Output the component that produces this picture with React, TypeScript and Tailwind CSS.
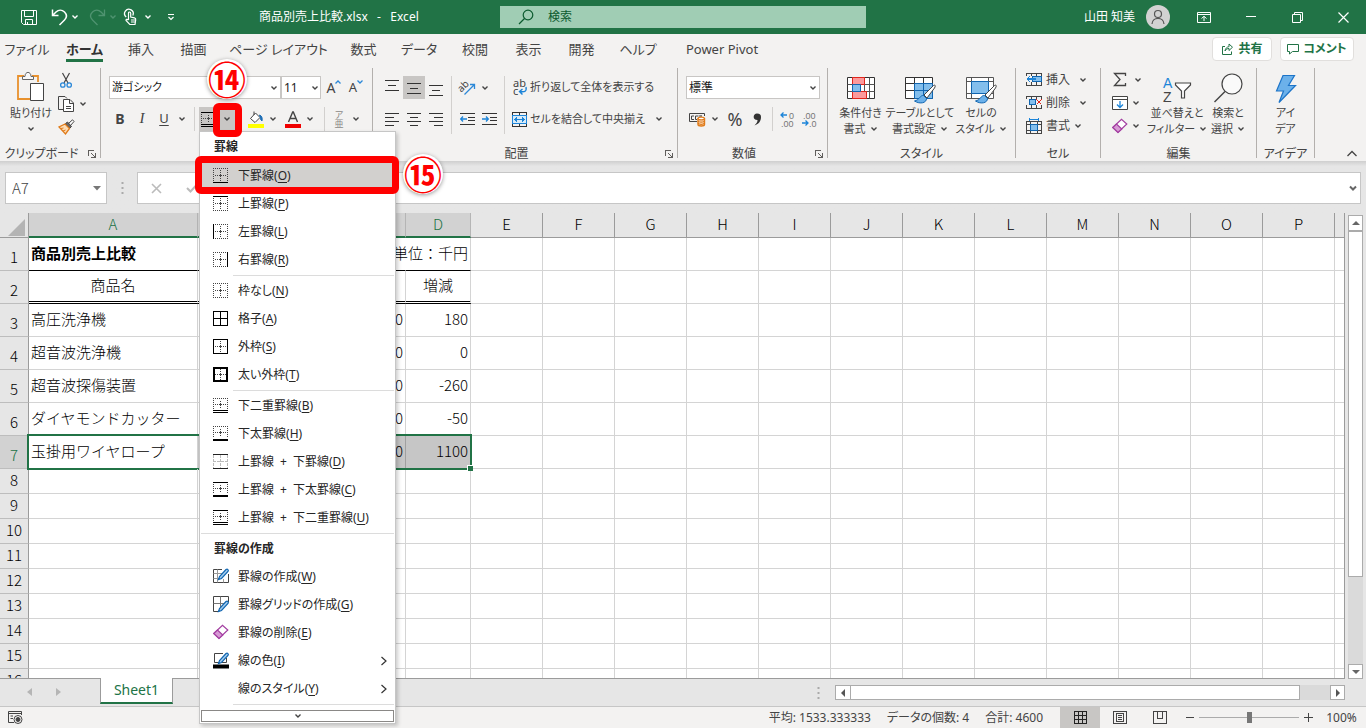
import React from "react";

const UI = "font-['Noto_Sans','Noto_Sans_CJK_JP',sans-serif] [font-feature-settings:'palt']";

type SvgProps = { w: number; h: number; children: React.ReactNode; className?: string; crisp?: boolean };

function Svg({ w, h, children, className = "", crisp = false }: SvgProps) {
  return (
    <svg
      width={w}
      height={h}
      viewBox={`0 0 ${w} ${h}`}
      fill="none"
      stroke="#444"
      strokeWidth="1"
      shapeRendering={crisp ? "crispEdges" : "auto"}
      className={`shrink-0 overflow-visible ${className}`}
      aria-hidden="true"
    >
      {children}
    </svg>
  );
}

function Chevron({ color = "#444", className = "" }: { color?: string; className?: string }) {
  return (
    <Svg w={8} h={6} className={className}>
      <path d="M1.5 1.5 L4 4 L6.5 1.5" stroke={color} strokeWidth="1.4" />
    </Svg>
  );
}

function Btn({ label, className, children }: { label: string; className: string; children: React.ReactNode }) {
  return (
    <button type="button" aria-label={label} className={`flex shrink-0 items-center justify-center ${className}`}>
      {children}
    </button>
  );
}

/* ---------- title bar ---------- */

function TitleBar() {
  return (
    <header className="flex h-[34px] shrink-0 items-center bg-[#217346] text-xs text-white">
      <div className="flex w-[259px] shrink-0 items-center pl-[17px]">
        <Btn label="上書き保存" className="w-6">
          <Svg w={18} h={17}>
            <path d="M1.5 1.5 H16.5 V15.5 H3.5 L1.5 13.5 Z M4.5 1.5 V7.5 H13.5 V1.5 M5.5 15.5 V10.5 H12.5 V15.5 M7.5 13 V15.5" stroke="#fff" />
          </Svg>
        </Btn>
        <Btn label="元に戻す" className="ml-2 w-5">
          <Svg w={17} h={18}>
            <path d="M1.5 1.500 V7.5 H7.5 M1.5 7.5 L5 4 C7.500 1.500 11 1.500 13.500 4 C16 6.500 16 9.500 13.500 12 L8.500 17" stroke="#fff" strokeWidth="1.5" />
          </Svg>
        </Btn>
        <Btn label="元に戻すの一覧" className="w-3"><Chevron color="#fff" /></Btn>
        <Btn label="やり直し" className="ml-[6px] w-5">
          <Svg w={17} h={18}>
            <path d="M15.500 1.500 V7.500 H9.500 M15.500 7.500 L12 4 C9.500 1.500 6 1.500 3.500 4 C1 6.500 1 9.500 3.500 12 L8.500 17" stroke="#4f9370" strokeWidth="1.300" />
          </Svg>
        </Btn>
        <Btn label="やり直しの一覧" className="w-3"><Chevron color="#4f9370" /></Btn>
        <Btn label="タッチ/マウス モード" className="ml-px w-5">
          <Svg w={15} h={18}>
            <path d="M3.200 9 A4.300 4.300 0 1 1 9.800 7.500" stroke="#fff" strokeWidth="1.300" />
            <path d="M5.500 12 V5.200 C5.500 3.600 7.700 3.600 7.700 5.200 V9 L11.500 9.800 C12.500 10 12.900 10.700 12.700 11.800 L12 16.500 H6.800 L3 12.500 C2.700 11.500 4 10.800 5.500 12 M8 12 H12 M8 14 H12" stroke="#fff" strokeWidth="1.200" />
          </Svg>
        </Btn>
        <Btn label="モードの選択" className="ml-[2px] w-3"><Chevron color="#fff" /></Btn>
        <Btn label="クイック アクセスのカスタマイズ" className="ml-[11px] w-3">
          <Svg w={8} h={8}>
            <path d="M1 1.500 H7 M1.500 4 L4 6.500 L6.500 4" stroke="#fff" strokeWidth="1.200" />
          </Svg>
        </Btn>
      </div>
      <h1 className="w-[241px] shrink-0 whitespace-nowrap text-xs font-normal">商品別売上比較.xlsx&nbsp;&nbsp; -&nbsp;&nbsp; Excel</h1>
      <label className="flex h-[22px] w-[366px] items-center bg-[#a0cdb4] pl-[18px]">
        <Svg w={17} h={16}>
          <circle cx="10" cy="6" r="4.800" stroke="#0b5a2e" strokeWidth="1.200" />
          <path d="M6.500 9.500 L1 15" stroke="#0b5a2e" strokeWidth="1.300" />
        </Svg>
        <input
          aria-label="検索"
          placeholder="検索"
          className="ml-[13px] w-40 bg-transparent text-xs text-[#0b5a2e] outline-none placeholder:text-[#0b5a2e] placeholder:opacity-100"
        />
      </label>
      <div className="ml-auto flex items-center">
        <span>山田 知美</span>
        <span className="ml-[11px] flex size-6 items-center justify-center rounded-full bg-[#d2d2d2]">
          <Svg w={16} h={16}>
            <circle cx="8" cy="5" r="3.500" stroke="#555" strokeWidth="1.200" />
            <path d="M2 15 C2.500 7.500 13.500 7.500 14 15" stroke="#555" strokeWidth="1.200" />
          </Svg>
        </span>
        <Btn label="リボンの表示オプション" className="ml-[11px] h-8 w-[46px]">
          <Svg w={14} h={11}>
            <path d="M.5 .5 H13.500 V10.500 H.5 Z M.5 2.500 H13.500 M7 9 V4.500 M4.500 6.500 L7 4.300 L9.500 6.500" stroke="#fff" />
          </Svg>
        </Btn>
        <Btn label="最小化" className="h-8 w-[47px]">
          <Svg w={10} h={2} crisp><path d="M0 .5 H10" stroke="#fff" /></Svg>
        </Btn>
        <Btn label="元に戻す (縮小)" className="h-8 w-[46px]">
          <Svg w={11} h={11}><path d="M.5 2.500 H8.500 V10.500 H.5 Z M2.500 2.500 V.5 H10.500 V8.500 H8.500" stroke="#fff" /></Svg>
        </Btn>
        <Btn label="閉じる" className="h-8 w-[46px]">
          <Svg w={11} h={11}><path d="M.5 .5 L10.500 10.500 M10.500 .5 L.5 10.500" stroke="#fff" strokeWidth="1.200" /></Svg>
        </Btn>
      </div>
    </header>
  );
}

/* ---------- ribbon tabs ---------- */

const TABS: [string, string][] = [
  ["ファイル", "w-[54px]"],
  ["ホーム", "w-[61px]"],
  ["挿入", "w-[52px]"],
  ["描画", "w-[53px]"],
  ["ページ レイアウト", "w-[117px]"],
  ["数式", "w-[53px]"],
  ["データ", "w-[58px]"],
  ["校閲", "w-[54px]"],
  ["表示", "w-[53px]"],
  ["開発", "w-[53px]"],
  ["ヘルプ", "w-[60px]"],
  ["Power Pivot", "w-[108px]"],
];

function RibbonTabs() {
  return (
    <nav className="flex h-[30px] shrink-0 items-center text-[13px]">
      {TABS.map(([name, width]) => (
        <button key={name} type="button" className={`flex h-[30px] shrink-0 items-start justify-center whitespace-nowrap ${width}`}>
          <span
            className={
              name === "ホーム"
                ? "h-7 border-b-[3px] border-[#217346] pt-[5px] font-bold leading-5 text-[#333]"
                : "pt-[5px] leading-5"
            }
          >
            {name}
          </span>
        </button>
      ))}
      <div className="ml-auto flex gap-2 pr-3 text-xs font-bold text-[#217346]">
        <button type="button" className="flex h-6 w-[60px] items-center justify-center gap-1 rounded-sm border border-[#e1dfdd] bg-white">
          <Svg w={13} h={12}>
            <path d="M4 3.500 H1.500 V11.500 H10.500 V8.500 M4 8 C4.500 4.500 7 3.700 8 3.700 V1 L11.500 4.200 L8 7.500 V5.500 C6.500 5.500 5 6 4 8" stroke="#217346" />
          </Svg>
          共有
        </button>
        <button type="button" className="flex h-6 w-[74px] items-center justify-center gap-1 rounded-sm border border-[#e1dfdd] bg-white">
          <Svg w={12} h={11}>
            <path d="M.5 .5 H11.500 V7.500 H5.500 L2.500 10 V7.500 H.5 Z" stroke="#217346" />
          </Svg>
          コメント
        </button>
      </div>
    </nav>
  );
}

/* ---------- ribbon ---------- */

function Group({ label, width, launcher, covered, children }: { label: string; width: string; launcher?: boolean; covered?: boolean; children: React.ReactNode }) {
  return (
    <section aria-label={label} className={`flex h-[90px] shrink-0 flex-col border-r border-[#b3b0ad] ${width}`}>
      <div className="h-[75px]">{children}</div>
      <div className={`relative flex h-[15px] items-center justify-center whitespace-nowrap pt-[6px] ${launcher ? "pr-[17px]" : ""}`}>
        {!covered && <span>{label}</span>}
        {launcher && !covered && (
          <button type="button" aria-label={`${label}の設定`} className="absolute bottom-0 right-1">
            <Svg w={8} h={8} crisp>
              <path d="M.5 6 V.5 H6 M3 3 L7 7 M7.500 3 V7.500 H3" stroke="#605e5c" />
            </Svg>
          </button>
        )}
      </div>
    </section>
  );
}

const VLine = ({ className = "" }: { className?: string }) => <span className={`h-6 w-px shrink-0 bg-[#d2d0ce] ${className}`} />;

function Clipboard() {
  return (
    <div className="flex pl-2">
      <button type="button" className="flex w-[46px] flex-col items-center whitespace-nowrap pt-[3px] text-[11px]">
        <Svg w={28} h={31}>
          <path d="M13 28 H1 V5 H7 M15 5 H21 V11" stroke="#e8912d" strokeWidth="1.800" />
          <path d="M5.500 8.500 V5.500 H8 C8 0 14 0 14 5.500 H16.500 V8.500 Z" stroke="#666" fill="#f8f8f8" />
          <path d="M13.500 12.500 H26.500 V29.500 H13.500 Z" stroke="#444" fill="#fff" />
        </Svg>
        <span className="mt-[2px] leading-[18px]">貼り付け</span>
        <Chevron className="mt-1" />
      </button>
      <div className="ml-[3px] flex flex-col">
        <Btn label="切り取り" className="h-6 w-[18px]">
          <Svg w={12} h={17}>
            <path d="M2.500 1 L8 11 M9.500 1 L4 11" stroke="#444" strokeWidth="1.200" />
            <circle cx="2.800" cy="13" r="2.200" stroke="#2b88d8" strokeWidth="1.300" />
            <circle cx="9.200" cy="13" r="2.200" stroke="#2b88d8" strokeWidth="1.300" />
          </Svg>
        </Btn>
        <div className="flex">
          <Btn label="コピー" className="h-6 w-[18px]">
            <Svg w={17} h={17}>
              <path d="M5.500 13.500 H.5 V.5 H7 L9 2.500" />
              <path d="M5.500 3.500 H12 L15.500 7 V15.500 H5.500 Z M11.500 3.500 V7.500 H15.500 M8 10.500 H13 M8 12.500 H13" fill="#fff" />
            </Svg>
          </Btn>
          <Btn label="コピーの一覧" className="w-4"><Chevron /></Btn>
        </div>
        <Btn label="書式のコピー" className="h-[22px] w-[18px]">
          <Svg w={17} h={16}>
            <path d="M10 5 L14.500 .8 L16 2.500 L12 7" fill="#fff" />
            <path d="M7.500 4.500 L9.500 3 L13.500 7.500 L11.500 9.500 Z" fill="#666" />
            <path d="M7 5 L1 8 L7.500 15 L11.500 9.500 Z" stroke="#e07b1a" fill="#fbdcb5" strokeWidth="1.300" />
            <path d="M3 9.500 L5.500 9 M5 12 L7.500 11" stroke="#e07b1a" />
          </Svg>
        </Btn>
      </div>
    </div>
  );
}

function FontGroup() {
  return (
    <div className="pl-2 pt-2">
      <div className="flex h-[23px] items-center">
        <div className="relative h-[23px] w-[172px]">
          <select aria-label="フォント" className="h-full w-full appearance-none border border-[#c8c6c4] bg-white pl-[2px] text-[11px] text-[#222]">
            <option>游ゴシック</option>
          </select>
          <Chevron className="pointer-events-none absolute right-[3px] top-[9px]" />
        </div>
        <div className="relative h-[23px] w-10">
          <select aria-label="フォント サイズ" className="h-full w-full appearance-none border border-[#c8c6c4] bg-white pl-[2px] text-xs text-[#222]">
            <option>11</option>
          </select>
          <Chevron className="pointer-events-none absolute right-[2px] top-[9px]" />
        </div>
        <Btn label="フォント サイズの拡大" className="ml-[2px] h-6 w-[22px] text-sm">
          <span>A</span>
          <Svg w={6} h={4} className="mb-3"><path d="M.5 3.500 L3 1 L5.500 3.500" stroke="#2b88d8" strokeWidth="1.300" /></Svg>
        </Btn>
        <Btn label="フォント サイズの縮小" className="h-6 w-[22px] text-[13px]">
          <span>A</span>
          <Svg w={6} h={4} className="mb-3"><path d="M.5 .5 L3 3 L5.500 .5" stroke="#2b88d8" strokeWidth="1.300" /></Svg>
        </Btn>
      </div>
      <div className="mt-2 flex h-6 items-center">
        <Btn label="太字" className="w-[22px] text-sm font-bold">B</Btn>
        <Btn label="斜体" className="w-[22px] font-['Liberation_Serif',serif] text-[15px] italic">I</Btn>
        <Btn label="下線" className="w-[22px] text-[13px] underline underline-offset-2">U</Btn>
        <Btn label="下線の種類" className="w-[14px]"><Chevron /></Btn>
        <VLine className="ml-[5px]" />
        <Btn label="罫線" className="ml-1 h-6 w-[19px] bg-[#c8c6c4]"><BorderIcon kind="bottomDouble" top /></Btn>
        <Btn label="罫線の一覧" className="h-6 w-[18px] bg-[#c8c6c4]"><Chevron /></Btn>
        <Btn label="塗りつぶしの色" className="ml-[11px] w-[18px]">
          <Svg w={16} h={17}>
            <path d="M2.500 7.500 L7.500 2 L12 6.500 L7 11.500 Z M6 4 V0.500" fill="#fff" />
            <path d="M11.500 4 C14 5 14.500 7 14 10 C12 9 12.500 6 11.500 4" stroke="#1c6db5" fill="#1c6db5" />
            <path d="M0 15 H16" stroke="#ff0" strokeWidth="4" />
          </Svg>
        </Btn>
        <Btn label="塗りつぶしの色の一覧" className="w-4"><Chevron /></Btn>
        <Btn label="フォントの色" className="ml-[3px] w-[18px]">
          <Svg w={16} h={17}>
            <path d="M3.500 11 L7.700 1 H8.300 L12.500 11 M5 7.500 H11" strokeWidth="1.400" />
            <path d="M0 15 H16" stroke="#f00000" strokeWidth="4" />
          </Svg>
        </Btn>
        <Btn label="フォントの色の一覧" className="w-4"><Chevron /></Btn>
        <VLine className="ml-[6px]" />
        <Btn label="ふりがな" className="ml-[5px] w-[18px] flex-col text-[9px] leading-[9px] text-[#8a8886]">
          <span>ア</span>
          <span>亜</span>
        </Btn>
        <Btn label="ふりがなの一覧" className="w-4"><Chevron /></Btn>
      </div>
    </div>
  );
}

function Lines({ d }: { d: string }) {
  return <Svg w={14} h={14} crisp><path d={d} stroke="#333" /></Svg>;
}

function AlignGroup() {
  return (
    <div className="flex pl-2 pt-2">
      <div className="w-[70px]">
        <div className="flex h-[23px]">
          <Btn label="上揃え" className="w-[22px] pb-1"><Lines d="M0 1.500 H14 M3 6.500 H11 M0 11.500 H14" /></Btn>
          <Btn label="上下中央揃え" className="w-[22px] bg-[#c8c6c4]"><Lines d="M0 2.500 H14 M3 7.500 H11 M0 12.500 H14" /></Btn>
          <Btn label="下揃え" className="w-[22px] pt-1"><Lines d="M0 2.500 H14 M3 7.500 H11 M0 12.500 H14" /></Btn>
        </div>
        <div className="mt-2 flex h-6">
          <Btn label="左揃え" className="w-[22px]"><Lines d="M0 1.500 H14 M0 5.500 H9 M0 9.500 H14 M0 13.500 H9" /></Btn>
          <Btn label="中央揃え" className="w-[22px]"><Lines d="M0 1.500 H14 M3 5.500 H11 M0 9.500 H14 M3 13.500 H11" /></Btn>
          <Btn label="右揃え" className="w-[22px]"><Lines d="M0 1.500 H14 M5 5.500 H14 M0 9.500 H14 M5 13.500 H14" /></Btn>
        </div>
      </div>
      <div className="h-[58px] w-[54px] border-x border-[#d2d0ce]">
        <div className="flex h-[23px] pl-[6px]">
          <Btn label="方向" className="w-5">
            <Svg w={18} h={17}>
              <text x="-1" y="10" fontSize="10" fill="#444" stroke="none" transform="rotate(-45 5 8)">ab</text>
              <path d="M5.500 15.500 L15 6 M11 5.500 H15.500 V10" stroke="#2b88d8" strokeWidth="1.300" />
            </Svg>
          </Btn>
          <Btn label="方向の一覧" className="w-[14px]"><Chevron /></Btn>
        </div>
        <div className="mt-2 flex h-6 pl-1">
          <Btn label="インデントを減らす" className="w-[22px]">
            <Svg w={15} h={12}>
              <path d="M0 .5 H15 M8 4.500 H15 M8 7.500 H15 M0 11.500 H15" stroke="#333" />
              <path d="M7 6 H1 M3 3.500 L.7 6 L3 8.500" stroke="#1c84d8" strokeWidth="1.300" />
            </Svg>
          </Btn>
          <Btn label="インデントを増やす" className="w-[22px]">
            <Svg w={15} h={12}>
              <path d="M0 .5 H15 M8 4.500 H15 M8 7.500 H15 M0 11.500 H15" stroke="#333" />
              <path d="M0 6 H6 M4 3.500 L6.300 6 L4 8.500" stroke="#1c84d8" strokeWidth="1.300" />
            </Svg>
          </Btn>
        </div>
      </div>
      <div className="pl-[7px] text-[11px]">
        <button type="button" className="flex h-[23px] items-center gap-[2px] whitespace-nowrap">
          <Svg w={16} h={17}>
            <text x="1" y="8" fontSize="11" fill="#444" stroke="none">ab</text>
            <text x="1" y="16" fontSize="11" fill="#444" stroke="none">c</text>
            <path d="M14 8 C15 13 12 13 8 12.500 M10.500 10 L7.500 12.500 L10.500 15.500" stroke="#1c84d8" strokeWidth="1.400" />
          </Svg>
          折り返して全体を表示する
        </button>
        <div className="mt-2 flex h-6 items-center">
          <button type="button" className="flex items-center gap-[3px] whitespace-nowrap">
            <Svg w={15} h={15} crisp>
              <path d="M.5 .5 H14.500 V14.500 H.5 Z M7.500 .5 V4 M7.500 11 V14.500" stroke="#333" />
              <path d="M.5 3.500 H14.500 V11.500 H.5 Z" stroke="#1c84d8" fill="#d8ebf8" />
              <path d="M2.500 7.500 H12.500 M5 5.500 L3 7.500 L5 9.500 M10 5.500 L12 7.500 L10 9.500" stroke="#1c84d8" />
            </Svg>
            セルを結合して中央揃え
          </button>
          <Btn label="結合の一覧" className="w-7"><Chevron /></Btn>
        </div>
      </div>
    </div>
  );
}

function Decimals({ more }: { more?: boolean }) {
  return (
    <Svg w={17} h={17} className="font-['Liberation_Sans',sans-serif]">
      {more ? (
        <>
          <path d="M7 4 H1 M3.500 1.500 L1 4 L3.500 6.500" stroke="#1c84d8" strokeWidth="1.300" />
          <text x="9" y="8" fontSize="9" fill="#777" stroke="none">0</text>
          <text x="1" y="16" fontSize="9" fill="#777" stroke="none">.00</text>
        </>
      ) : (
        <>
          <text x="1" y="8" fontSize="9" fill="#777" stroke="none">.00</text>
          <path d="M0 12 H6 M3.500 9.500 L6 12 L3.500 14.500" stroke="#1c84d8" strokeWidth="1.300" />
          <text x="7" y="16" fontSize="9" fill="#777" stroke="none">.0</text>
        </>
      )}
    </Svg>
  );
}

function NumberGroup() {
  return (
    <div className="pl-2 pt-2">
      <div className="relative h-[23px] w-[134px]">
        <select aria-label="数値の書式" className="h-full w-full appearance-none border border-[#c8c6c4] bg-white pl-[2px] text-xs text-[#222]">
          <option>標準</option>
        </select>
        <Chevron className="pointer-events-none absolute right-[3px] top-[9px]" />
      </div>
      <div className="mt-2 flex h-6 items-center">
        <Btn label="通貨表示形式" className="ml-[2px] w-[18px]">
          <Svg w={17} h={15}>
            <path d="M8 9.500 H.5 V1.500 H15.500 V4 M5 4 H2.500 V7.500 H5 M9 4 H6.500 V7.500 H8 M12 4.500 V3.500 M9.500 4 H13" />
            <path d="M9 6 V12.500 C9 14.500 15.500 14.500 15.500 12.500 V6" stroke="#e07b1a" fill="#fbe3cb" strokeWidth="1.400" />
            <ellipse cx="12.250" cy="6.500" rx="3.200" ry="1.400" stroke="#e07b1a" fill="#fff" strokeWidth="1.200" />
            <path d="M9 9 C10 10.500 14.500 10.500 15.500 9 M9 11.200 C10 12.700 14.500 12.700 15.500 11.200" stroke="#e07b1a" strokeWidth="1.300" />
          </Svg>
        </Btn>
        <Btn label="通貨の一覧" className="w-[18px]"><Chevron /></Btn>
        <Btn label="パーセント スタイル" className="w-[22px] text-lg">%</Btn>
        <Btn label="桁区切りスタイル" className="w-[22px]">
          <Svg w={9} h={13}>
            <path d="M8 4 C8 8 6 11 1.500 12.500 C4 10 4.500 8.500 4.500 7 C-1 7 0 .5 4 .5 C7 .5 8 2 8 4 Z" fill="#333" stroke="none" />
          </Svg>
        </Btn>
        <VLine className="ml-[4px]" />
        <Btn label="小数点以下の表示桁数を増やす" className="ml-1 w-[22px]"><Decimals more /></Btn>
        <Btn label="小数点以下の表示桁数を減らす" className="w-[22px]"><Decimals /></Btn>
      </div>
    </div>
  );
}

function BigButton({ icon, lines, width, arrow = true }: { icon: React.ReactNode; lines: [string, string]; width: string; arrow?: boolean }) {
  return (
    <button type="button" className={`flex shrink-0 flex-col items-center whitespace-nowrap pt-[3px] text-[11px] ${width}`}>
      <span className="flex h-[33px] items-center">{icon}</span>
      <span className="leading-4">{lines[0]}</span>
      <span className="flex items-center gap-1 leading-[15px]">
        {lines[1]}
        {arrow && <Chevron />}
      </span>
    </button>
  );
}

const Brush = () => (
  <>
    <path d="M28.500 9.500 L19 19 L22 22 L29.500 12 C31 9.500 30 8.500 28.500 9.500 Z" fill="#fff" stroke="#444" />
    <path d="M18.500 19.500 C15 19 14.500 24 9.500 25 C15 28.500 21.500 27 21.500 22.500 Z" fill="#6cb1ea" stroke="#1065b0" />
  </>
);

const CondIcon = (
  <Svg w={28} h={25}>
    <path d="M.5 1.500 H27.500 V22.500 H.5 Z" fill="#fff" stroke="#333" />
    <path d="M.5 8.500 H27.500 M.5 15.500 H27.500 M17.500 1.500 V22.500 M22.500 1.500 V22.500" stroke="#555" />
    <path d="M5.500 1.500 H17.500 V8.500 H5.500 Z M5.500 15.500 H19.500 V22.500 H5.500 Z" fill="#fb9a9c" stroke="#e1251b" />
    <path d="M5.500 8.500 H13.500 V15.500 H5.500 Z" fill="#83beec" stroke="#1065b0" />
  </Svg>
);

const TableIcon = (
  <Svg w={30} h={25}>
    <path d="M.5 1.500 H27.500 V22.500 H.5 Z" fill="#fff" stroke="#333" />
    <path d="M9.500 7.500 H27.500 V22.500 H9.500 Z" fill="#83beec" stroke="none" />
    <path d="M.5 7.500 H27.500 M.5 14.500 H27.500 M9.500 1.500 V22.500 M18.500 1.500 V22.500" stroke="#333" />
    <path d="M9.500 7.500 H27.500 V22.500 H9.500 Z M9.500 14.500 H27.500 M18.500 7.500 V22.500" stroke="#1065b0" />
    <Brush />
  </Svg>
);

const CellStyleIcon = (
  <Svg w={30} h={25}>
    <path d="M.5 1.500 H27.500 V22.500 H.5 Z M.5 5.500 H27.500 M5.500 1.500 V22.500 M22.500 1.500 V22.500 M.5 17.500 H27.500" fill="#fff" stroke="#555" />
    <path d="M5.500 5.500 H22.500 V17.500 H5.500 Z" fill="#83beec" stroke="#1065b0" />
    <Brush />
  </Svg>
);

function StyleGroup() {
  return (
    <div className="flex pl-[5px] pt-px">
      <BigButton width="w-[55px]" icon={CondIcon} lines={["条件付き", "書式"]} />
      <BigButton width="w-[64px]" icon={TableIcon} lines={["テーブルとして", "書式設定"]} />
      <BigButton width="w-[58px]" icon={CellStyleIcon} lines={["セルの", "スタイル"]} />
    </div>
  );
}

function CellsGroup() {
  const rows: [string, React.ReactNode][] = [
    ["挿入", <path key="a" d="M6 4.500 H15.500 V9.500 H6 Z" fill="#83beec" stroke="#1065b0" />],
    ["削除", <path key="b" d="M3.500 4.500 H9.500 V9.500 H3.500 Z" fill="#83beec" stroke="#1065b0" />],
    ["書式", <path key="c" d="M4.500 6.500 H11.500 V12.500 H4.500 Z" fill="#83beec" stroke="#1065b0" />],
  ];
  return (
    <div className="flex flex-col pl-[10px]">
      {rows.map(([name, shape], i) => (
        <button key={name} type="button" className="flex h-[23px] items-center gap-[3px]">
          <Svg w={17} h={16} crisp>
            {i < 2 ? (
              <path d="M.5 4 V1.500 H15.500 V4 M5.500 1 V4 M10.500 1 V4 M.5 10 V13.500 H15.500 V10 M5.500 10 V13.500 M10.500 10 V13.500" />
            ) : (
              <path d="M.5 3.500 H15.500 V15.500 H.5 Z M4.500 3.500 V15.500 M11.500 3.500 V15.500 M.5 6.500 H15.500 M.5 12.500 H15.500" />
            )}
            {shape}
            {i === 0 && <path d="M10 7 H1 M4 4 L1 7 L4 10" stroke="#1c84d8" strokeWidth="1.400" />}
            {i === 1 && <path d="M10.500 4.500 L15.500 9.500 M15.500 4.500 L10.500 9.500" stroke="#e1251b" strokeWidth="1.400" />}
            {i === 2 && <path d="M3.500 0 V3 M12.500 0 V3 M3.500 1.500 H12.500" stroke="#1c84d8" />}
          </Svg>
          {name}
          <Chevron className={i === 2 ? "ml-px" : "ml-[6px]"} />
        </button>
      ))}
    </div>
  );
}

const Eraser = () => (
  <Svg w={16} h={16}>
    <path d="M.8 9.500 L9.500 1.200 L14.800 6 L6 14.500 Z" fill="#fff" stroke="#a33ea1" strokeWidth="1.200" />
    <path d="M.8 9.500 L4.500 6 L9.800 11 L6 14.500 Z" fill="#d79ad5" stroke="#a33ea1" strokeWidth="1.200" />
  </Svg>
);

function EditGroup() {
  return (
    <div className="flex pl-[11px]">
      <div className="flex w-[38px] shrink-0 flex-col">
        <button type="button" aria-label="合計" className="flex h-[23px] items-center gap-[6px]">
          <Svg w={16} h={16}><path d="M13.500 4 V1.500 H2.500 L8 7.500 L2.500 13.500 H13.500 V11" strokeWidth="1.300" /></Svg>
          <Chevron />
        </button>
        <button type="button" aria-label="フィル" className="flex h-[23px] items-center gap-1">
          <Svg w={16} h={14}>
            <path d="M.5 .5 H15.500 V13.500 H.5 Z M.5 3.500 H15.500" fill="#fff" />
            <path d="M8 5 V11 M5 8.500 L8 11.500 L11 8.500" stroke="#1c84d8" strokeWidth="1.300" />
          </Svg>
          <Chevron />
        </button>
        <button type="button" aria-label="クリア" className="flex h-[23px] items-center gap-1">
          <Eraser />
          <Chevron />
        </button>
      </div>
      <div className="flex pt-px">
        <BigButton
          width="w-[54px]"
          lines={["並べ替えと", "フィルター"]}
          icon={
            <Svg w={30} h={28} className="font-['Liberation_Sans',sans-serif]">
              <text x="1" y="13" fontSize="14" fill="#1c84d8" stroke="none">A</text>
              <text x="1" y="27" fontSize="14" fill="#444" stroke="none">Z</text>
              <path d="M13.500 8 H28.500 V10 L22.500 16 V23 H19.500 V16 L13.500 10 Z" fill="#fff" stroke="#444" strokeWidth="1.200" />
            </Svg>
          }
        />
        <BigButton
          width="w-[48px]"
          lines={["検索と", "選択"]}
          icon={
            <Svg w={31} h={31}>
              <circle cx="19" cy="11" r="10" fill="#fafafa" stroke="#444" strokeWidth="1.200" />
              <path d="M12 18.500 L1.500 29" stroke="#444" strokeWidth="1.500" />
            </Svg>
          }
        />
      </div>
    </div>
  );
}

function Ribbon() {
  return (
    <div className="flex h-[97px] shrink-0 items-start bg-[#f3f2f1] pt-1 text-xs">
      <Group label="クリップボード" width="w-[101px]" launcher><Clipboard /></Group>
      <Group label="フォント" width="w-[272px]" covered><FontGroup /></Group>
      <Group label="配置" width="w-[305px]" launcher><AlignGroup /></Group>
      <Group label="数値" width="w-[150px]" launcher><NumberGroup /></Group>
      <Group label="スタイル" width="w-[188px]"><StyleGroup /></Group>
      <Group label="セル" width="w-[85px]"><CellsGroup /></Group>
      <Group label="編集" width="w-[156px]"><EditGroup /></Group>
      <Group label="アイデア" width="w-[58px]">
        <div className="flex justify-center pt-px">
          <BigButton
            width="w-[50px]"
            arrow={false}
            lines={["アイ", "デア"]}
            icon={
              <Svg w={24} h={30}>
                <path d="M9 1.500 H20.500 L14.500 11.500 H21.500 L5 28.500 L9.500 17 H2.500 Z" fill="#6cb1ea" stroke="#1c74c8" strokeWidth="1.200" />
              </Svg>
            }
          />
        </div>
      </Group>
      <Btn label="リボンを折りたたむ" className="ml-auto mr-2 self-end pb-1">
        <Svg w={12} h={7}><path d="M1.500 6 L6 1.500 L10.500 6" strokeWidth="1.300" /></Svg>
      </Btn>
    </div>
  );
}

/* ---------- formula bar ---------- */

function FormulaBar() {
  return (
    <div className="flex h-[52px] shrink-0 items-start bg-linear-to-b from-[#cfcfcf] from-0% to-[#e6e6e6] to-10% pl-[5px] pr-[5px] pt-[11px]">
      <div className="flex h-8 w-[102px] shrink-0 items-center border border-[#c6c6c6] bg-white pr-[5px]">
        <input
          aria-label="名前ボックス"
          defaultValue="A7"
          className="w-full min-w-0 bg-transparent pl-[6px] font-['Noto_Sans_CJK_JP',sans-serif] text-[15px] font-light text-[#444] outline-none"
        />
        <Svg w={8} h={5}><path d="M0 0 H8 L4 4.500 Z" fill="#777" stroke="none" /></Svg>
      </div>
      <Svg w={3} h={32} className="ml-[14px] mr-[13px]">
        <path d="M.5 10 H2.500 V12 H.5 Z M.5 15 H2.500 V17 H.5 Z M.5 20 H2.500 V22 H.5 Z" fill="#aaa" stroke="none" />
      </Svg>
      <div className="flex h-8 min-w-0 flex-1 items-center border border-[#c6c6c6] bg-white pl-3 pr-[3px]">
        <Btn label="キャンセル" className="w-3">
          <Svg w={11} h={11}><path d="M1 1 L10 10 M10 1 L1 10" stroke="#bbb" strokeWidth="1.600" /></Svg>
        </Btn>
        <Btn label="入力" className="ml-6 w-3">
          <Svg w={12} h={10}><path d="M1 5 L4.500 8.500 L11 1.500" stroke="#bbb" strokeWidth="2" /></Svg>
        </Btn>
        <input aria-label="数式バー" className="ml-12 min-w-0 flex-1 bg-transparent outline-none" />
        <Svg w={8} h={7}><path d="M1 1.500 L4 4.500 L7 1.500" stroke="#666" strokeWidth="2" /></Svg>
      </div>
    </div>
  );
}

/* ---------- sheet ---------- */

const LETTERS = "ABCDEFGHIJKLMNOP".split("");
const EMPTY_COLS = LETTERS.slice(4);

type Row = { n: number; a?: string; c?: string; d?: string };

const ROWS: Row[] = [
  { n: 1, a: "商品別売上比較", d: "単位：千円" },
  { n: 2, a: "商品名", d: "増減" },
  { n: 3, a: "高圧洗浄機", c: "0", d: "180" },
  { n: 4, a: "超音波洗浄機", c: "0", d: "0" },
  { n: 5, a: "超音波探傷装置", c: "0", d: "-260" },
  { n: 6, a: "ダイヤモンドカッター", c: "0", d: "-50" },
  { n: 7, a: "玉掛用ワイヤロープ", c: "0", d: "1100" },
  { n: 8 }, { n: 9 }, { n: 10 }, { n: 11 }, { n: 12 }, { n: 13 }, { n: 14 }, { n: 15 }, { n: 16 },
];

function Sheet() {
  return (
    <div className="flex min-h-0 flex-1 bg-[#e6e6e6]">
      <div className="min-w-0 flex-1 overflow-hidden border-b border-r border-[#9b9b9b]">
        <table className="w-full table-fixed border-separate border-spacing-0 bg-white font-['Noto_Sans_CJK_JP',sans-serif] text-[15px] font-light text-black [font-feature-settings:normal]">
          <colgroup>
            <col className="w-[29px]" />
            <col className="w-[169px]" />
            <col className="w-[104px]" />
            <col className="w-[104px]" />
            <col className="w-[65px]" />
            {EMPTY_COLS.map((c) => <col key={c} className="w-[72px]" />)}
            <col />
          </colgroup>
          <thead>
            <tr className="h-[25px] bg-[#e6e6e6] leading-5">
              <th className="border-b border-r border-b-[#9b9b9b] border-r-[#9b9b9b] p-0" aria-label="すべて選択">
                <Svg w={17} h={17} className="ml-2 mt-1"><path d="M17 0 V17 H0 Z" fill="#b4b4b4" stroke="none" /></Svg>
              </th>
              {LETTERS.map((l) =>
                l <= "D" ? (
                  <th key={l} className="border-b-2 border-r border-b-[#217346] border-r-[#b5b5b5] bg-[#d2d2d2] p-0 pb-px text-center font-light text-[#217346]">{l}</th>
                ) : (
                  <th key={l} className="border-b border-r border-[#9b9b9b] p-0 pb-[2px] text-center font-light">{l}</th>
                ),
              )}
              <th className="border-b border-[#9b9b9b] p-0" aria-label="余白" />
            </tr>
          </thead>
          <tbody>
            {ROWS.map((r) => {
              const edge =
                r.n === 1
                  ? "border-b border-b-black"
                  : r.n === 2
                    ? "border-b-[3px] border-double border-b-black"
                    : "border-b border-b-[#d4d4d4]";
              const tone = r.n === 7 ? "bg-[#c6c6c6]" : "";
              return (
                <tr key={r.n} className={r.n < 8 ? "h-[33px] leading-7" : "h-[25px] leading-5"}>
                  <th
                    className={`border-b border-r border-b-[#bdbdbd] border-r-[#9b9b9b] p-0 pb-[3px] text-center align-bottom font-light leading-5 ${r.n === 7 ? "bg-[#d2d2d2] text-[#217346]" : "bg-[#e6e6e6]"}`}
                  >
                    {r.n}
                  </th>
                  <td
                    className={`relative whitespace-nowrap border-r border-r-[#d4d4d4] p-0 pb-[2px] ${r.n === 2 ? "" : "pl-[2px]"} ${edge} ${r.n === 1 ? "font-bold" : ""} ${r.n === 2 ? "text-center" : ""}`}
                  >
                    {r.a}
                    {r.n === 7 && (
                      <span className="pointer-events-none absolute -left-[2px] -top-[2px] h-9 w-[445px] border-2 border-[#217346]">
                        <span className="absolute -bottom-[3px] -right-[3px] size-[6px] border-l border-t border-white bg-[#217346]" />
                      </span>
                    )}
                  </td>
                  <td className={`border-r border-r-[#d4d4d4] p-0 ${edge} ${tone}`} />
                  <td className={`border-r p-0 pb-[2px] pr-[2px] text-right ${r.n === 1 ? "border-r-transparent" : r.n === 7 ? "border-r-[#a0a0a0]" : "border-r-[#d4d4d4]"} ${edge} ${tone}`}>{r.c}</td>
                  <td className={`border-r border-r-[#d4d4d4] p-0 pb-[2px] ${r.n === 2 ? "text-center" : "pr-[2px] text-right"} ${edge} ${tone}`}>
                    <span className={r.n === 2 ? "" : "flex justify-end whitespace-nowrap"}>{r.d}</span>
                  </td>
                  {EMPTY_COLS.map((c) => <td key={c} className="border-b border-r border-[#d4d4d4] p-0" />)}
                  <td className="border-b border-[#d4d4d4] p-0" />
                </tr>
              );
            })}
          </tbody>
        </table>
      </div>
      <div className="flex w-[21px] shrink-0 flex-col pl-[3px] pr-[3px] pt-[2px]">
        <Btn label="上へ" className="h-4 border border-[#ababab] bg-white">
          <Svg w={8} h={4}><path d="M0 4 H8 L4 0 Z" fill="#666" stroke="none" /></Svg>
        </Btn>
        <div className="flex-1 bg-[#dadada]">
          <div className="h-4/5 border border-[#ababab] bg-white" />
        </div>
        <Btn label="下へ" className="h-[15px] border border-[#ababab] bg-white">
          <Svg w={8} h={4}><path d="M0 0 H8 L4 4 Z" fill="#666" stroke="none" /></Svg>
        </Btn>
      </div>
    </div>
  );
}

function SheetTabs() {
  return (
    <div className="flex h-[27px] shrink-0 items-start bg-[#e6e6e6]">
      <Btn label="前のシート" className="ml-[26px] h-[26px] w-[6px]">
        <Svg w={5} h={8}><path d="M5 0 V8 L0 4 Z" fill="#b5b5b5" stroke="none" /></Svg>
      </Btn>
      <Btn label="次のシート" className="ml-[23px] h-[26px] w-[6px]">
        <Svg w={5} h={8}><path d="M0 0 V8 L5 4 Z" fill="#b5b5b5" stroke="none" /></Svg>
      </Btn>
      <button type="button" className="-mt-px ml-[39px] h-[26px] w-[73px] border-x border-b-2 border-x-[#9b9b9b] border-b-[#217346] bg-white text-sm text-[#217346]">
        Sheet1
      </button>
      <div className="ml-auto flex pt-[6px]">
        <Svg w={3} h={15} className="mr-[15px]">
          <path d="M.5 2 H2.500 V4 H.5 Z M.5 7 H2.500 V9 H.5 Z M.5 12 H2.500 V14 H.5 Z" fill="#aaa" stroke="none" />
        </Svg>
        <Btn label="左へ" className="h-[15px] w-4 border border-[#ababab] bg-white">
          <Svg w={4} h={8}><path d="M4 0 V8 L0 4 Z" fill="#555" stroke="none" /></Svg>
        </Btn>
        <div className="flex h-[15px] w-[479px] bg-[#dadada]">
          <div className="w-[449px] border border-l-0 border-[#ababab] bg-white" />
        </div>
        <Btn label="右へ" className="mr-[21px] h-[15px] w-[15px] border border-[#ababab] bg-white">
          <Svg w={4} h={8}><path d="M0 0 V8 L4 4 Z" fill="#555" stroke="none" /></Svg>
        </Btn>
      </div>
    </div>
  );
}

function StatusBar() {
  return (
    <footer className="flex h-[22px] shrink-0 items-center border-t border-[#c6c6c6] bg-[#f3f2f1] pl-[7px] text-xs text-[#444]">
      <Btn label="マクロの記録" className="w-4">
        <Svg w={15} h={13}>
          <path d="M6 11.500 H.5 V.5 H13.500 V4 M.5 2.500 H13.500 M2.500 5 H5 M2.500 7.500 H5" />
          <circle cx="10" cy="8.500" r="4" fill="#f3f2f1" />
          <circle cx="10" cy="8.500" r="2" fill="#444" />
        </Svg>
      </Btn>
      <div className="ml-auto flex items-center whitespace-nowrap">
        <span>平均: 1533.333333</span>
        <span className="ml-4">データの個数: 4</span>
        <span className="ml-4">合計: 4600</span>
        <Btn label="標準" className="ml-[17px] h-[22px] w-10 bg-[#c8c6c4]">
          <Svg w={13} h={13} crisp><path d="M.5 .5 H12.500 V12.500 H.5 Z M.5 4.500 H12.500 M.5 8.500 H12.500 M4.500 .5 V12.500 M8.500 .5 V12.500" stroke="#222" /></Svg>
        </Btn>
        <Btn label="ページ レイアウト" className="h-[22px] w-10">
          <Svg w={14} h={13} crisp><path d="M.5 .5 H13.500 V12.500 H.5 Z M3.500 2.500 H10.500 V10.500 H3.500 Z M5 4.500 H9 M5 6.500 H9 M5 8.500 H9" /></Svg>
        </Btn>
        <Btn label="改ページ プレビュー" className="h-[22px] w-10">
          <Svg w={14} h={13} crisp><path d="M.5 .5 H13.500 V12.500 H.5 Z M4.500 .5 V7.500 H9.500 M9.500 .5 V7.500" /></Svg>
        </Btn>
        <Btn label="縮小" className="w-[19px]"><Svg w={8} h={2} crisp><path d="M0 .5 H8" /></Svg></Btn>
        <input
          type="range"
          aria-label="ズーム"
          min={0}
          max={100}
          defaultValue={50}
          className="h-3 w-[100px] appearance-none bg-transparent [&::-webkit-slider-runnable-track]:h-px [&::-webkit-slider-runnable-track]:bg-[#ababab] [&::-webkit-slider-thumb]:-mt-[5px] [&::-webkit-slider-thumb]:h-[11px] [&::-webkit-slider-thumb]:w-[5px] [&::-webkit-slider-thumb]:appearance-none [&::-webkit-slider-thumb]:bg-[#777]"
        />
        <Btn label="拡大" className="w-[18px]"><Svg w={9} h={9} crisp><path d="M0 4.500 H9 M4.500 0 V9" /></Svg></Btn>
        <button type="button" className="w-[49px] text-center text-xs">100%</button>
      </div>
    </footer>
  );
}

/* ---------- border menu ---------- */

type BorderKind =
  | "bottom" | "top" | "left" | "right" | "none" | "all" | "outside" | "thick"
  | "bottomDouble" | "bottomThick" | "topBottom";

const DOT_BOX = "M.5 .5 H14.500 V14.500 H.5 Z";

function BorderIcon({ kind, top }: { kind: BorderKind; top?: boolean }) {
  if (kind === "topBottom") {
    return (
      <Svg w={15} h={15} crisp>
        <path d="M.5 1 V14 M7.500 1 V14 M14.500 1 V14 M0 7.500 H15" stroke="#bbb" strokeDasharray="3 1" />
        <path d="M0 .5 H15 M0 14.500 H15" stroke="#222" />
      </Svg>
    );
  }
  if (kind === "all") {
    return (
      <Svg w={15} h={15} crisp>
        <path d={`${DOT_BOX} M7.500 0 V15 M0 7.500 H15`} stroke="#000" />
      </Svg>
    );
  }
  const open = kind === "bottomDouble" || kind === "bottomThick";
  const dotted = open
    ? "M0 .5 H15 M.5 0 V11 M14.500 0 V11"
    : "M0 .5 H15 M0 14.500 H15 M.5 0 V15 M14.500 0 V15";
  const cross = open ? "M7.500 3 V10 M2 6.500 H13" : "M7.500 2 V13 M2 7.500 H13";
  return (
    <Svg w={15} h={15} crisp>
      <path d={dotted} stroke="#444" strokeDasharray="1 1" />
      <path d={cross} stroke="#444" strokeDasharray="1 1" />
      <path d={open ? "M6 6.500 H9 M7.500 5 V8" : "M6 7.500 H9 M7.500 6 V9"} stroke="#444" />
      {kind === "bottom" && <path d="M0 14.500 H15" stroke="#000" />}
      {(kind === "top" || top) && <path d="M0 .5 H15" stroke="#000" />}
      {kind === "left" && <path d="M.5 0 V15" stroke="#000" />}
      {kind === "right" && <path d="M14.500 0 V15" stroke="#000" />}
      {kind === "outside" && <path d={DOT_BOX} stroke="#000" />}
      {kind === "thick" && <path d="M1 1 H14 V14 H1 Z" stroke="#000" strokeWidth="2" />}
      {kind === "bottomDouble" && <path d="M0 12.500 H15 M0 14.500 H15" stroke="#000" />}
      {kind === "bottomThick" && <path d="M0 14 H15" stroke="#000" strokeWidth="2" />}
    </Svg>
  );
}

const Pencil = () => (
  <path d="M5.500 11.500 L6.500 8.500 L13 1.500 C14.500 .5 16 2 15 3.500 L8.500 10.500 Z" fill="#a5cdee" stroke="#1065b0" strokeWidth="1.200" />
);

function DrawIcon({ kind }: { kind: "draw" | "grid" | "color" }) {
  return (
    <Svg w={17} h={17}>
      {kind === "draw" && (
        <>
          <path d="M9 1.500 H.5 V14.500 H15.500 V6" stroke="#444" />
          <path d="M.5 5.500 H9 M.5 10.500 H6 M4.500 1.500 V14.500 M10.500 11 V14.500" stroke="#999" />
          <Pencil />
        </>
      )}
      {kind === "grid" && (
        <>
          <path d="M15.500 6 V.5 H.5 V15.500 H6" stroke="#444" />
          <path d="M7.500 .5 V12 M.5 7.500 H12" stroke="#777" />
          <g transform="translate(0 4)"><Pencil /></g>
        </>
      )}
      {kind === "color" && (
        <>
          <path d="M10 1.500 H1.500 V10.500 H6 M13.500 6 V10.500 H9" stroke="#444" />
          <path d="M0 14.500 H16" stroke="#000" strokeWidth="4" />
          <Pencil />
        </>
      )}
    </Svg>
  );
}

function MenuItem({ icon, text, accel, active, sub }: { icon?: React.ReactNode; text: string; accel: string; active?: boolean; sub?: boolean }) {
  const [first, second] = text.split(" + ");
  return (
    <button
      type="button"
      role="menuitem"
      className={`flex h-7 w-full shrink-0 items-center whitespace-nowrap pr-2 text-left ${active ? "bg-[#d2d0ce]" : ""}`}
    >
      <span className="ml-[13px] flex w-[25px] shrink-0 pb-[2px]">{icon}</span>
      <span>
        {first}
        {second && <span className="mx-[6px]">+</span>}
        {second}(<u className="underline-offset-2">{accel}</u>)
      </span>
      {sub && (
        <Svg w={7} h={10} className="ml-auto"><path d="M1.500 1 L6 5 L1.500 9" stroke="#333" strokeWidth="1.200" /></Svg>
      )}
    </button>
  );
}

const Sep = ({ full }: { full?: boolean }) => <div className={`my-px h-px shrink-0 bg-[#dcdcdc] ${full ? "mx-px" : "ml-[33px] mr-px"}`} />;

function BorderMenu() {
  return (
    <div role="menu" className="absolute left-[199px] top-[131px] flex w-[197px] flex-col border border-[#c6c6c6] bg-white pb-px text-xs text-[#262626] shadow-[2px_2px_4px_rgba(0,0,0,0.2)]">
      <div className="flex h-[30px] items-center pl-[14px] font-bold">罫線</div>
      <MenuItem active icon={<BorderIcon kind="bottom" />} text="下罫線" accel="O" />
      <MenuItem icon={<BorderIcon kind="top" />} text="上罫線" accel="P" />
      <MenuItem icon={<BorderIcon kind="left" />} text="左罫線" accel="L" />
      <MenuItem icon={<BorderIcon kind="right" />} text="右罫線" accel="R" />
      <Sep />
      <MenuItem icon={<BorderIcon kind="none" />} text="枠なし" accel="N" />
      <MenuItem icon={<BorderIcon kind="all" />} text="格子" accel="A" />
      <MenuItem icon={<BorderIcon kind="outside" />} text="外枠" accel="S" />
      <MenuItem icon={<BorderIcon kind="thick" />} text="太い外枠" accel="T" />
      <Sep />
      <MenuItem icon={<BorderIcon kind="bottomDouble" />} text="下二重罫線" accel="B" />
      <MenuItem icon={<BorderIcon kind="bottomThick" />} text="下太罫線" accel="H" />
      <MenuItem icon={<BorderIcon kind="topBottom" />} text="上罫線 + 下罫線" accel="D" />
      <MenuItem icon={<BorderIcon kind="bottomThick" top />} text="上罫線 + 下太罫線" accel="C" />
      <MenuItem icon={<BorderIcon kind="bottomDouble" top />} text="上罫線 + 下二重罫線" accel="U" />
      <Sep full />
      <div className="flex h-7 items-center pb-px pl-[14px] font-bold">罫線の作成</div>
      <MenuItem icon={<DrawIcon kind="draw" />} text="罫線の作成" accel="W" />
      <MenuItem icon={<DrawIcon kind="grid" />} text="罫線グリッドの作成" accel="G" />
      <MenuItem icon={<Eraser />} text="罫線の削除" accel="E" />
      <MenuItem icon={<DrawIcon kind="color" />} text="線の色" accel="I" sub />
      <MenuItem text="線のスタイル" accel="Y" sub />
      <Sep />
      <Btn label="さらに表示" className="mx-px mt-1 h-3 border border-[#8a8886]"><Chevron /></Btn>
    </div>
  );
}

function Badge({ mark, place }: { mark: string; place: string }) {
  return (
    <span className={`absolute flex size-10 items-center justify-center rounded-full bg-white pb-[3px] font-['Noto_Sans_CJK_JP',sans-serif] text-[38px] font-bold leading-none text-[#ff0000] shadow-[0_1px_4px_rgba(0,0,0,0.4)] ${place}`}>
      {mark}
    </span>
  );
}

export default function App() {
  return (
    <div className={`relative flex h-screen flex-col overflow-hidden bg-[#f3f2f1] text-[#444] ${UI}`}>
      <TitleBar />
      <RibbonTabs />
      <Ribbon />
      <FormulaBar />
      <Sheet />
      <SheetTabs />
      <StatusBar />
      <BorderMenu />
      <div className="pointer-events-none absolute left-[213px] top-[103px] h-[34px] w-[29px] rounded-md border-[7px] border-[#ff0000]" />
      <div className="pointer-events-none absolute left-[195px] top-[156px] h-[38px] w-[204px] rounded-md border-[7px] border-[#ff0000]" />
      <Badge mark="⑭" place="left-[207px] top-[59px]" />
      <Badge mark="⑮" place="left-[403px] top-[154px]" />
    </div>
  );
}
